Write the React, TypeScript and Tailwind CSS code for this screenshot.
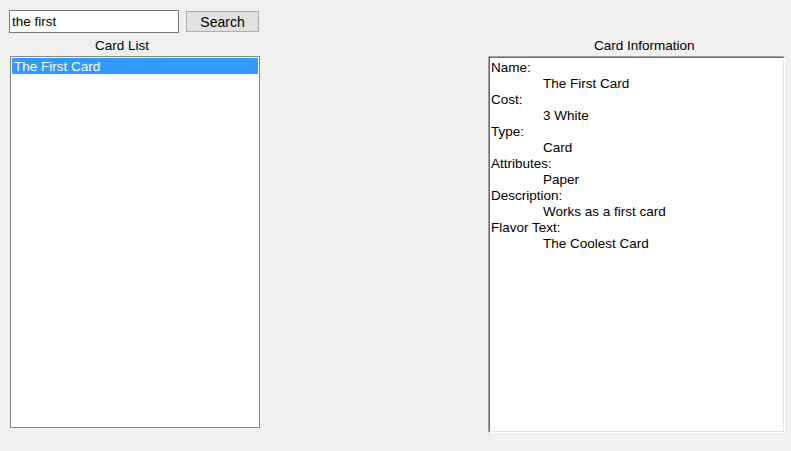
const FIELDS = [
  { label: 'Name:', value: 'The First Card' },
  { label: 'Cost:', value: '3 White' },
  { label: 'Type:', value: 'Card' },
  { label: 'Attributes:', value: 'Paper' },
  { label: 'Description:', value: 'Works as a first card' },
  { label: 'Flavor Text:', value: 'The Coolest Card' },
]

const App = () => {
  return (
    <div className="w-[791px] h-[451px] bg-[#f0f0f0] flex text-[13.5px] leading-[16px] text-black font-['Liberation_Sans',Arial,sans-serif] overflow-hidden">
      <div className="w-[251px] ml-[9px] pt-[10px] flex flex-col">
        <div className="flex items-start">
          <div className="w-[170px] h-[23px] border border-[#7a7a7a] bg-white pl-[2px] pt-[3px]">the first</div>
          <button className="ml-[7px] mt-[1px] w-[73px] h-[21px] border border-[#adadad] bg-[#e1e1e1] leading-[21px] text-[14px] text-center">
            Search
          </button>
        </div>
        <div className="mt-[4px] pl-[86px] pt-[1px]">Card List</div>
        <div className="mt-[2px] ml-[1px] w-[250px] h-[372px] border border-[#828790] bg-white p-[1px]">
          <div className="h-[16px] bg-[#3399ff] text-white pl-[2px] leading-[17px]">The First Card</div>
        </div>
      </div>

      <div className="ml-[228px] pt-[38px] flex flex-col">
        <div className="pl-[106px]">Card Information</div>
        <div className="mt-[2px] w-[297px] h-[377px] border border-t-[#a0a0a0] border-l-[#a0a0a0] border-r-white border-b-white">
          <div className="h-full border border-t-[#696969] border-l-[#696969] border-r-[#e3e3e3] border-b-[#e3e3e3] bg-white pl-[1px] pt-[2px]">
            {FIELDS.map((f) => (
              <div key={f.label}>
                <div>{f.label}</div>
                <div className="pl-[52px]">{f.value}</div>
              </div>
            ))}
          </div>
        </div>
      </div>
    </div>
  )
}

export default App
